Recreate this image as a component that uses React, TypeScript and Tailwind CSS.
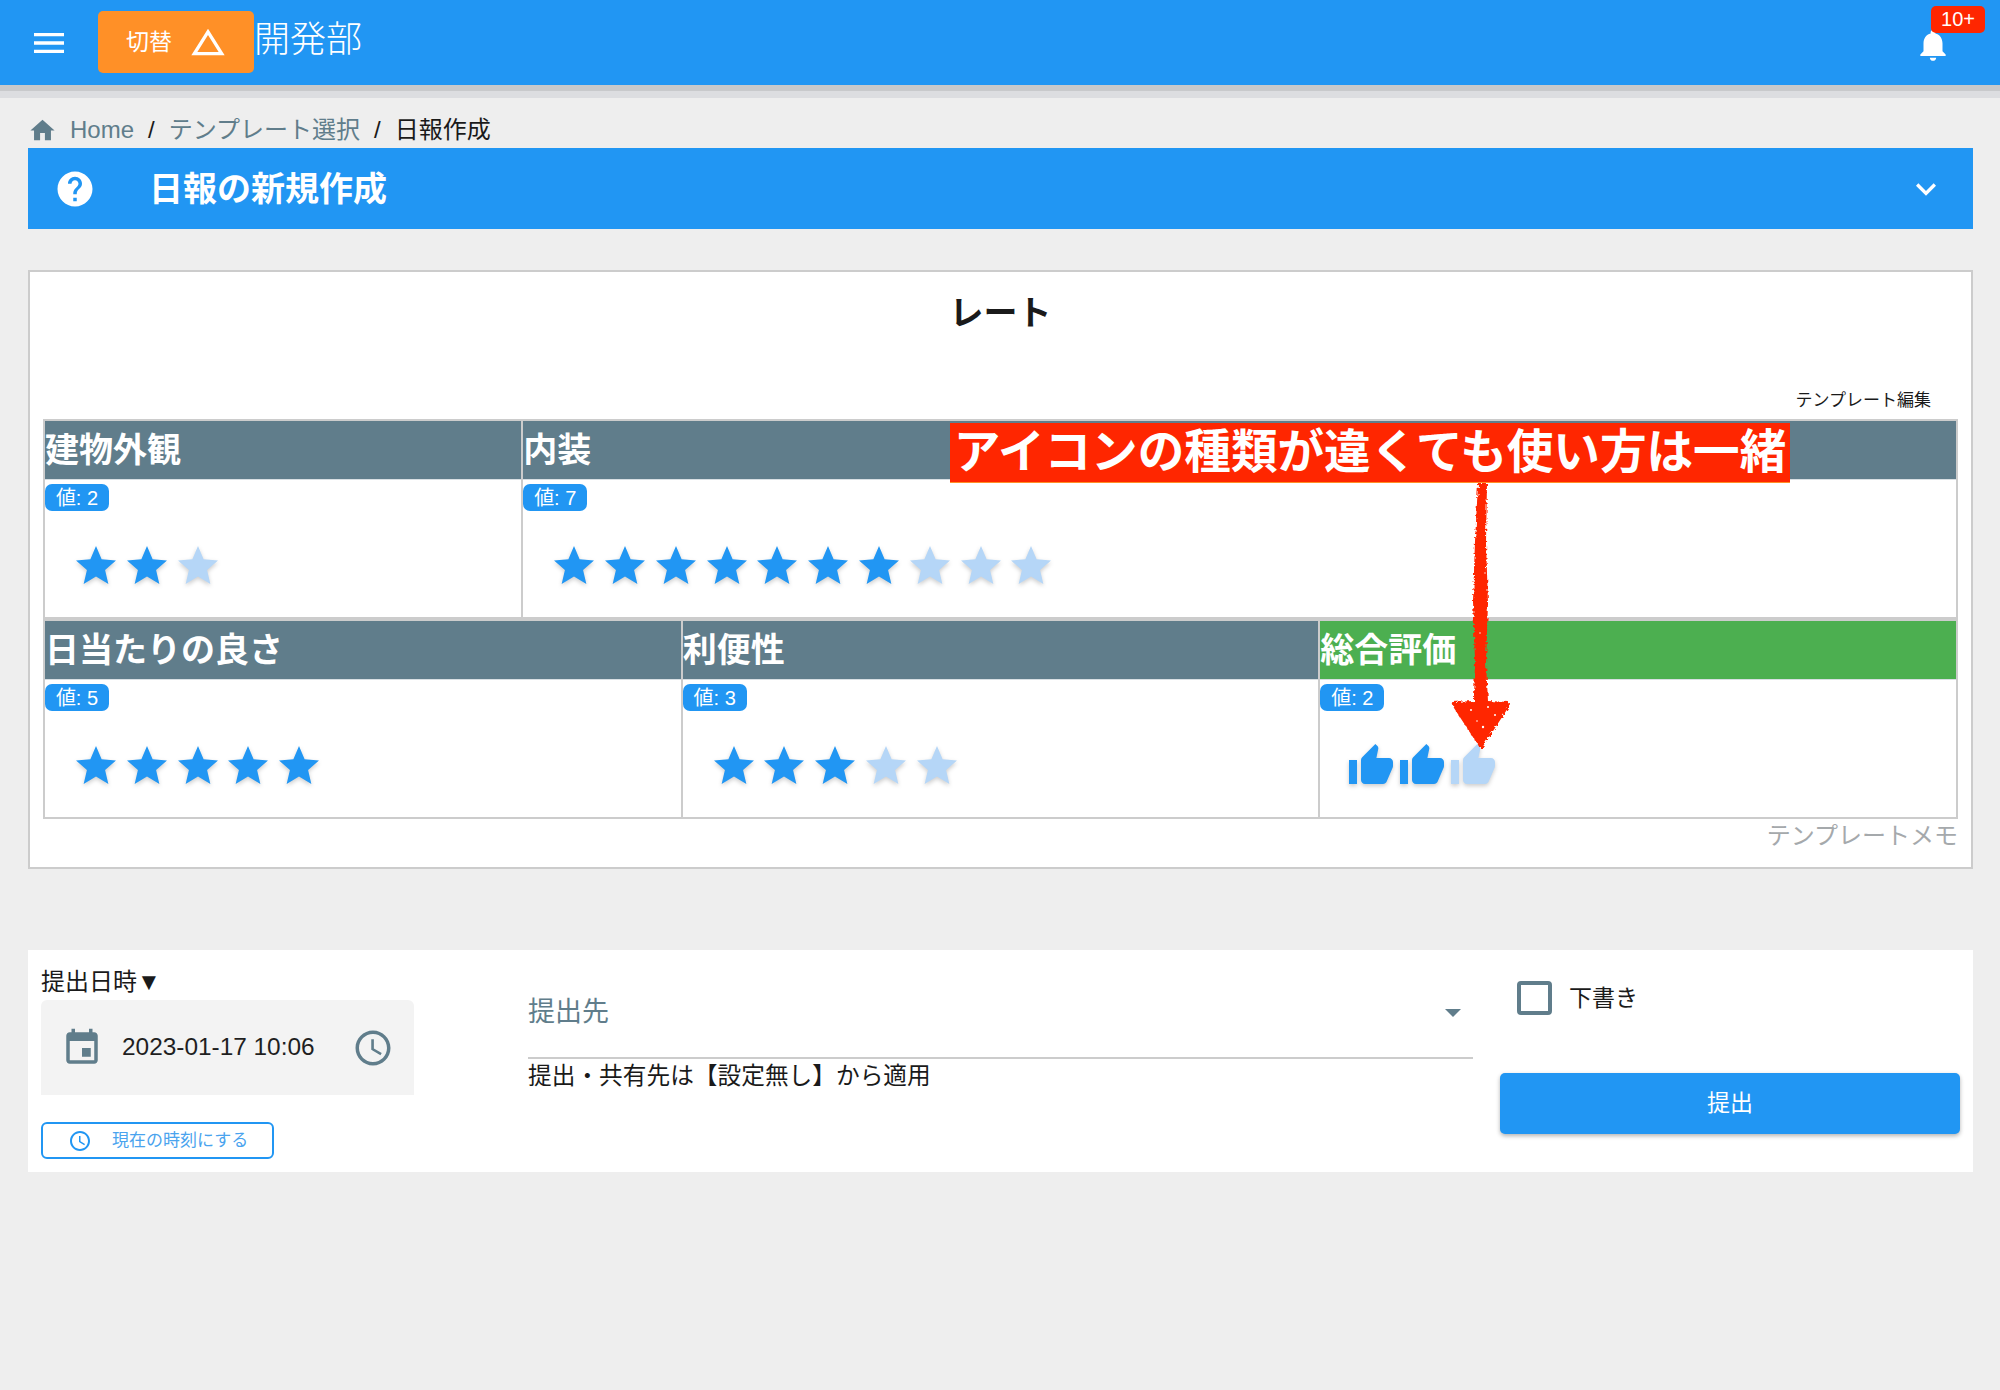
const ICONS = {
  menu: 'M3 18h18v-2H3v2zm0-5h18v-2H3v2zm0-7v2h18V6H3z',
  change: 'M12 7.77L18.39 18H5.61L12 7.77M12 4L2 20h20L12 4z',
  bell: 'M12 22c1.1 0 2-.9 2-2h-4c0 1.1.9 2 2 2zm6-6v-5c0-3.07-1.63-5.64-4.5-6.32V4c0-.83-.67-1.5-1.5-1.5s-1.5.67-1.5 1.5v.68C7.64 5.36 6 7.92 6 11v5l-2 2v1h16v-1l-2-2z',
  home: 'M10 20v-6h4v6h5v-8h3L12 3 2 12h3v8z',
  help: 'M12 2C6.48 2 2 6.48 2 12s4.48 10 10 10 10-4.48 10-10S17.52 2 12 2zm1 17h-2v-2h2v2zm2.07-7.75l-.9.92C13.45 12.9 13 13.5 13 15h-2v-.5c0-1.1.45-2.1 1.17-2.83l1.24-1.26c.37-.36.59-.86.59-1.41 0-1.1-.9-2-2-2s-2 .9-2 2H8c0-2.21 1.79-4 4-4s4 1.79 4 4c0 .88-.36 1.68-.93 2.25z',
  expand: 'M16.59 8.59L12 13.17 7.41 8.59 6 10l6 6 6-6z',
  star: 'M12 17.27L18.18 21l-1.64-7.03L22 9.24l-7.19-.61L12 2 9.19 8.63 2 9.24l5.46 4.73L5.82 21z',
  thumb: 'M1 21h4V9H1v12zm22-11c0-1.1-.9-2-2-2h-6.31l.95-4.57.03-.32c0-.41-.17-.79-.44-1.06L14.17 1 7.59 7.59C7.22 7.95 7 8.45 7 9v10c0 1.1.9 2 2 2h9c.83 0 1.54-.5 1.84-1.22l3.02-7.05c.09-.23.14-.47.14-.73v-2z',
  clock: 'M11.99 2C6.47 2 2 6.48 2 12s4.47 10 9.99 10C17.52 22 22 17.52 22 12S17.52 2 11.99 2zM12 20c-4.42 0-8-3.58-8-8s3.58-8 8-8 8 3.58 8 8-3.58 8-8 8zm.5-13H11v6l5.25 3.15.75-1.23-4.5-2.67z',
  event: 'M17 12h-5v5h5v-5zM16 1v2H8V1H6v2H5c-1.11 0-1.99.9-1.99 2L3 19c0 1.1.89 2 2 2h14c1.1 0 2-.9 2-2V5c0-1.1-.9-2-2-2h-1V1h-2zm3 18H5V8h14v11z',
}

function Icon({ name, className }: { name: keyof typeof ICONS; className?: string }) {
  return (
    <svg viewBox="0 0 24 24" fill="currentColor" className={className}>
      <path d={ICONS[name]} />
    </svg>
  )
}

type RateCellProps = {
  title: string
  value: number
  max: number
  icon?: 'star' | 'thumb'
  green?: boolean
  className: string
}

function RateCell({ title, value, max, icon = 'star', green, className }: RateCellProps) {
  return (
    <div className={`border-y-2 border-r-2 border-[#cccccc] h-[200px] ${className}`}>
      <div
        className={`h-[59px] flex items-center text-[34px] font-bold text-white leading-none border-b border-[#d8dfe3] ${
          green ? 'bg-[#4caf50]' : 'bg-[#607d8b]'
        }`}
      >
        {title}
      </div>
      <div className="mt-[4px] w-[64px] h-[27px] rounded-[7px] bg-[#2196f3] text-white text-[20px] leading-none flex items-center justify-center">
        値: {value}
      </div>
      <div className="mt-[31px] pl-[27px] flex gap-[2.8px]">
        {Array.from({ length: max }).map((_, i) => (
          <Icon
            key={i}
            name={icon}
            className={`w-12 h-12 drop-shadow-[0_2px_2px_rgba(0,0,0,0.2)] ${
              i < value ? 'text-[#2196f3]' : 'text-[#b5d6f7]'
            }`}
          />
        ))}
      </div>
    </div>
  )
}

export default function App() {
  return (
    <div className="relative w-[2000px] min-h-[1390px] bg-[#eeeeee] text-[#1a1a1a] overflow-hidden font-['Liberation_Sans','Noto_Sans_CJK_JP',sans-serif]">
      <header className="relative h-[85px] bg-[#2196f3] text-white flex items-center shadow-[0_6px_0_#c8c9cb,0_13px_0_#dcdde0]">
        <Icon name="menu" className="ml-[29px] w-10 h-10" />
        <div className="ml-[29px] -mt-[1px] w-[156px] h-[62px] rounded-[5px] bg-[#ff9027] flex items-center pl-[28px] gap-[16px] text-[23px]">
          切替
          <Icon name="change" className="w-[40px] h-[40px]" />
        </div>
        <div className="-mt-[6px] text-[36px] font-light">開発部</div>
        <div className="relative ml-auto mr-[48px] mt-[4px]">
          <Icon name="bell" className="w-[38px] h-[38px]" />
          <span className="absolute -top-[20px] left-[17px] w-[54px] h-[27px] rounded-[5px] bg-[#ff2600] text-[20px] leading-none flex items-center justify-center">
            10+
          </span>
        </div>
      </header>

      <nav className="h-[63px] pl-[28px] pb-[3px] flex items-end text-[24px] leading-[30px]">
        <Icon name="home" className="w-[29px] h-[29px] text-[#607d8b]" />
        <span className="ml-[13px] text-[#607d8b]">Home</span>
        <span className="mx-[14px]">/</span>
        <span className="text-[#607d8b]">テンプレート選択</span>
        <span className="mx-[14px]">/</span>
        <span>日報作成</span>
      </nav>

      <section className="ml-[28px] w-[1945px] h-[81px] bg-[#2196f3] text-white flex items-center pl-[26px] pr-[27px]">
        <Icon name="help" className="w-[42px] h-[42px]" />
        <h1 className="ml-[53px] mt-[1px] text-[34px] font-bold">日報の新規作成</h1>
        <Icon name="expand" className="ml-auto w-10 h-10" />
      </section>

      <section className="ml-[28px] w-[1945px] mt-[41px] h-[599px] bg-white border-2 border-[#cccccc] px-[13px]">
        <h2 className="pt-[19px] h-[66px] text-center text-[34px] font-bold leading-[44px]">レート</h2>
        <div className="mt-[53px] h-[20px] flex justify-end pr-[27px] text-[17px] leading-[20px]">テンプレート編集</div>
        <div className="mt-[8px]">
          <div className="flex border-l-2 border-[#cccccc]">
            <RateCell title="建物外観" value={2} max={3} className="w-1/4" />
            <RateCell title="内装" value={7} max={10} className="w-3/4" />
          </div>
          <div className="flex border-l-2 border-[#cccccc]">
            <RateCell title="日当たりの良さ" value={5} max={5} className="w-1/3" />
            <RateCell title="利便性" value={3} max={5} className="w-1/3" />
            <RateCell title="総合評価" value={2} max={3} icon="thumb" green className="w-1/3" />
          </div>
        </div>
        <div className="mt-[1px] text-right text-[24px] leading-[32px] text-[#a5a9ac]">テンプレートメモ</div>
      </section>

      <section className="ml-[28px] w-[1945px] mt-[81px] h-[222px] bg-white flex pl-[13px]">
        <div className="w-[373px]">
          <div className="pt-[16px] h-[50px] text-[24px] leading-[32px]">提出日時▼</div>
          <div className="h-[95px] rounded-t-[6px] bg-[#f3f3f3] flex items-center pl-[20px] pr-[20px] text-[24.4px] text-[#1f1f1f]">
            <Icon name="event" className="w-[42px] h-[42px] text-[#607d8b]" />
            <span className="ml-[19px]">2023-01-17 10:06</span>
            <Icon name="clock" className="ml-auto w-[42px] h-[42px] text-[#607d8b]" />
          </div>
          <button className="mt-[27px] w-[233px] h-[37px] rounded-[6px] border-2 border-[#2196f3] bg-white text-[#4aa3ee] text-[17px] flex items-center pl-[25px] gap-[20px]">
            <Icon name="clock" className="w-[24px] h-[24px] text-[#2196f3]" />
            現在の時刻にする
          </button>
        </div>
        <div className="ml-[114px] w-[945px]">
          <div className="relative h-[109px] border-b-2 border-[#cccccc] pt-[44px] text-[27px] leading-[36px] text-[#607d8b]">
            提出先
            <span className="absolute right-[12px] top-[59px] w-0 h-0 border-x-[8px] border-x-transparent border-t-[8px] border-t-[#607d8b]" />
          </div>
          <p className="mt-[1px] text-[23.7px] leading-[32px]">提出・共有先は【設定無し】から適用</p>
        </div>
        <div className="ml-[27px] w-[460px]">
          <div className="h-[123px] pt-[31px] pl-[17px] flex items-start gap-[17px] text-[23px] leading-[34px]">
            <span className="w-[35px] h-[34px] rounded-[4px] border-4 border-[#607d8b] bg-white" />
            下書き
          </div>
          <button className="w-full h-[61px] rounded-[5px] bg-[#2196f3] text-white text-[23px] shadow-[0_2px_4px_rgba(0,0,0,0.3)]">
            提出
          </button>
        </div>
      </section>

      {/* 赤い注釈 */}
      <div className="absolute left-[950px] top-[423px] w-[840px] h-[60px] bg-[#ff2600] border-b border-[#ff9027] text-white text-[46.6px] font-bold leading-[58px] flex justify-center whitespace-nowrap">
        アイコンの種類が違くても使い方は一緒
      </div>
      <svg className="absolute left-[1450px] top-[483px] w-[66px] h-[266px]" viewBox="0 0 66 266" fill="#ff2600">
        <defs>
          <filter id="rough" x="-20%" y="-5%" width="140%" height="110%">
            <feTurbulence type="fractalNoise" baseFrequency="0.35" numOctaves="2" seed="4" />
            <feDisplacementMap in="SourceGraphic" scale="5" />
          </filter>
        </defs>
        <g filter="url(#rough)">
          <path d="M28 0h9l-1 60 2 60-2 60 2 38 21 1-1 6-26 40-2 0-26-40-2-6 22-1 1-40-2-60 2-60z" />
        </g>
        <g fill="#ffffff">
          <circle cx="21" cy="227" r="1" />
          <circle cx="38" cy="224" r="1" />
          <circle cx="45" cy="232" r="1" />
          <circle cx="33" cy="244" r="1.2" />
          <circle cx="27" cy="238" r="0.8" />
          <circle cx="30" cy="150" r="0.7" />
          <circle cx="35" cy="90" r="0.7" />
        </g>
      </svg>
    </div>
  )
}
